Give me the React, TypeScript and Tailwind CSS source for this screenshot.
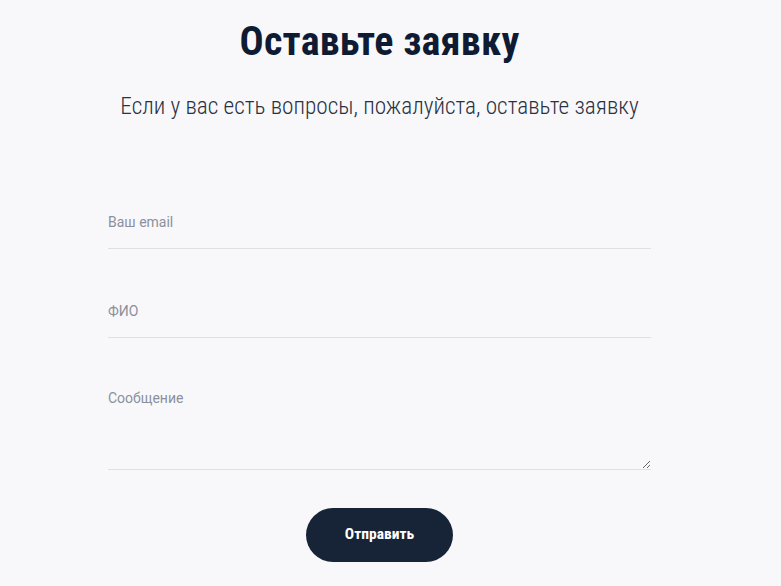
export default function App() {
  const font = { fontFamily: '"Roboto Condensed", Roboto, "Liberation Sans", sans-serif' };
  const labelFont = 'h-[49px] w-full border-b border-[#dfe0e5] bg-transparent pb-[5px] text-[14px] text-[#1f2937] outline-none placeholder:text-[#8b909c] [font-family:Roboto,sans-serif]';
  return (
    <div className="min-h-[586px] w-full bg-[#f8f8fb]" style={font}>
      <div className="w-[759px]">
        <div className="flex flex-col items-center pt-[14px]">
          <h1 className="text-[40px] font-bold leading-[56px] text-[#0f1b33] tracking-[0.3px]">Оставьте заявку</h1>
          <p className="mt-[21px] text-[23.25px] font-light leading-[31px] text-[#2a3142]">
            Если у вас есть вопросы, пожалуйста, оставьте заявку
          </p>
        </div>
        <form className="mx-auto mt-[78px] flex w-[543px] flex-col" onSubmit={(e) => e.preventDefault()}>
          <input type="email" placeholder="Ваш email" className={labelFont} />
          <input type="text" placeholder="ФИО" className={`mt-[40px] ${labelFont}`} />
          <textarea
            placeholder="Сообщение"
            className="mt-[40px] h-[92px] w-full border-b border-[#dfe0e5] bg-transparent pt-[10px] text-[14px] leading-[20px] text-[#1f2937] outline-none [font-family:Roboto,sans-serif] placeholder:text-[#8b909c]"
          />
          <button
            type="submit"
            className="mx-auto mt-[38px] h-[54px] w-[147px] rounded-full bg-[#172438] text-[15.5px] font-bold text-white"
          >
            Отправить
          </button>
        </form>
      </div>
    </div>
  );
}
